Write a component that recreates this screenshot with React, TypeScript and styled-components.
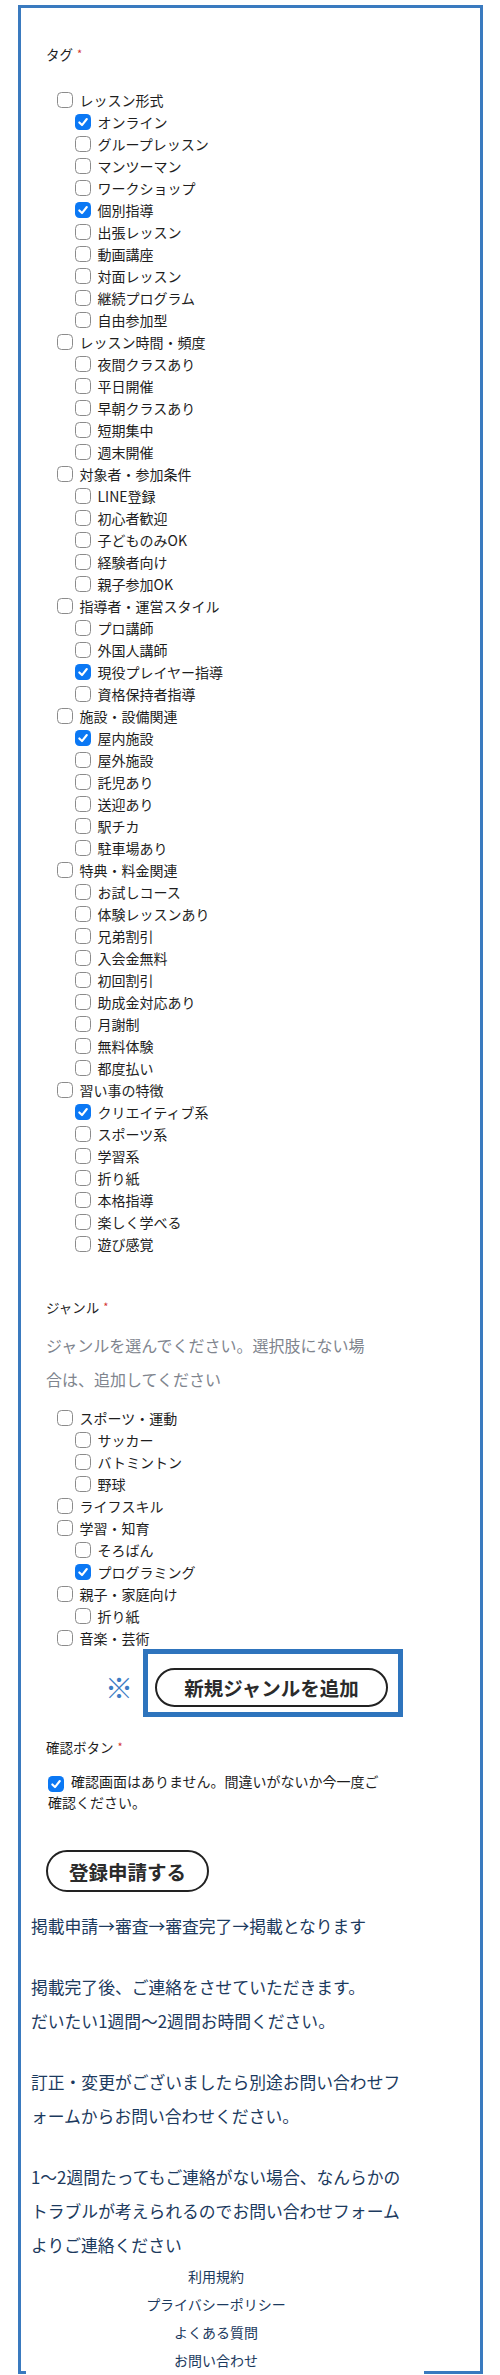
import React from "react";
import styled, { createGlobalStyle } from "styled-components";

const GlobalStyle = createGlobalStyle`
  html, body { margin: 0; padding: 0; background: #fff; }
  body {
    font-family: "Noto Sans CJK JP", "Noto Sans", sans-serif;
    color: #1e1e1e;
  }
  * { box-sizing: border-box; }
`;

type Group = { label: string; checked?: boolean; children: { label: string; checked?: boolean }[] };

const tagGroups: Group[] = [
  {
    label: "レッスン形式",
    children: [
      { label: "オンライン", checked: true },
      { label: "グループレッスン" },
      { label: "マンツーマン" },
      { label: "ワークショップ" },
      { label: "個別指導", checked: true },
      { label: "出張レッスン" },
      { label: "動画講座" },
      { label: "対面レッスン" },
      { label: "継続プログラム" },
      { label: "自由参加型" },
    ],
  },
  {
    label: "レッスン時間・頻度",
    children: [
      { label: "夜間クラスあり" },
      { label: "平日開催" },
      { label: "早朝クラスあり" },
      { label: "短期集中" },
      { label: "週末開催" },
    ],
  },
  {
    label: "対象者・参加条件",
    children: [
      { label: "LINE登録" },
      { label: "初心者歓迎" },
      { label: "子どものみOK" },
      { label: "経験者向け" },
      { label: "親子参加OK" },
    ],
  },
  {
    label: "指導者・運営スタイル",
    children: [
      { label: "プロ講師" },
      { label: "外国人講師" },
      { label: "現役プレイヤー指導", checked: true },
      { label: "資格保持者指導" },
    ],
  },
  {
    label: "施設・設備関連",
    children: [
      { label: "屋内施設", checked: true },
      { label: "屋外施設" },
      { label: "託児あり" },
      { label: "送迎あり" },
      { label: "駅チカ" },
      { label: "駐車場あり" },
    ],
  },
  {
    label: "特典・料金関連",
    children: [
      { label: "お試しコース" },
      { label: "体験レッスンあり" },
      { label: "兄弟割引" },
      { label: "入会金無料" },
      { label: "初回割引" },
      { label: "助成金対応あり" },
      { label: "月謝制" },
      { label: "無料体験" },
      { label: "都度払い" },
    ],
  },
  {
    label: "習い事の特徴",
    children: [
      { label: "クリエイティブ系", checked: true },
      { label: "スポーツ系" },
      { label: "学習系" },
      { label: "折り紙" },
      { label: "本格指導" },
      { label: "楽しく学べる" },
      { label: "遊び感覚" },
    ],
  },
];

const genreGroups: Group[] = [
  {
    label: "スポーツ・運動",
    children: [{ label: "サッカー" }, { label: "バトミントン" }, { label: "野球" }],
  },
  { label: "ライフスキル", children: [] },
  {
    label: "学習・知育",
    children: [{ label: "そろばん" }, { label: "プログラミング", checked: true }],
  },
  { label: "親子・家庭向け", children: [{ label: "折り紙" }] },
  { label: "音楽・芸術", children: [] },
];

const Page = styled.div`
  padding: 5px 0 6px 18px;
`;

const Frame = styled.div`
  width: 465px;
  border: 3px solid #3a7abf;
`;

const FormSection = styled.div`
  width: 369px;
  padding: 35px 0 0 25px;
`;

const Label = styled.div<{ $gap: number }>`
  margin-top: ${(p) => p.$gap}px;
  font-size: 13.5px;
  line-height: 20px;
  color: #1e1e1e;
`;

const Req = styled.span`
  color: #d3342f;
  font-size: 11px;
  margin-left: 4px;
  vertical-align: 2px;
`;

const CheckList = styled.ul<{ $gap: number }>`
  list-style: none;
  margin: ${(p) => p.$gap}px 0 0 11px;
  padding: 0;
`;

const Row = styled.li<{ $child?: boolean }>`
  display: flex;
  align-items: center;
  gap: 6.5px;
  height: 22px;
  padding-left: ${(p) => (p.$child ? 18 : 0)}px;
  font-size: 14px;
  color: #1e1e1e;
  white-space: nowrap;
`;

const Box = styled.span<{ $checked?: boolean }>`
  flex: none;
  display: inline-flex;
  align-items: center;
  justify-content: center;
  width: 16px;
  height: 16px;
  border-radius: 4.5px;
  border: ${(p) => (p.$checked ? "none" : "1.5px solid #8b8b8b")};
  background: ${(p) => (p.$checked ? "#0b78f4" : "#fff")};
`;

const InlineBox = styled(Box)`
  vertical-align: -3px;
  margin-right: 7px;
`;

const Desc = styled.p`
  margin: 11px 0 0;
  font-size: 16px;
  line-height: 34px;
  color: #80858e;
`;

const AddRow = styled.div`
  display: flex;
  align-items: center;
  gap: 10px;
  padding-left: 59px;
`;

const Kome = styled.span`
  font-size: 28px;
  font-weight: 700;
  line-height: 1;
  color: #3d7cc4;
  padding-top: 8px;
`;

const AddFrame = styled.div`
  border: 5px solid #2e74bd;
  padding: 14px 10px 5px 7px;
`;

const Pill = styled.button<{ $w: number; $h: number }>`
  display: flex;
  align-items: center;
  justify-content: center;
  width: ${(p) => p.$w}px;
  height: ${(p) => p.$h}px;
  padding: 0;
  border: 2.5px solid #222;
  border-radius: 999px;
  background: #fff;
  font-family: inherit;
  font-size: 19.5px;
  font-weight: 700;
  color: #2b2b2b;
`;

const SubmitWrap = styled.div`
  margin-top: 37px;
`;

const ConfirmText = styled.div`
  margin-top: 14px;
  padding-left: 2px;
  font-size: 14px;
  line-height: 21px;
  color: #1e1e1e;
`;

const Notes = styled.div`
  margin-top: 17px;
  padding-left: 10px;
`;

const Para = styled.p`
  margin: 0;
  font-size: 16.8px;
  line-height: 34px;
  color: #1c3a5e;
  white-space: nowrap;
  & + & {
    margin-top: 27px;
  }
`;

const Footer = styled.nav`
  width: 398px;
  margin: 0 0 -3px 5px;
  padding-right: 18px;
  background: #fff;
  text-align: center;
`;

const FooterLink = styled.a`
  display: block;
  font-size: 14px;
  line-height: 28px;
  color: #1c3a5e;
  text-decoration: none;
`;

const Check = () => (
  <svg width="12" height="12" viewBox="0 0 12 12">
    <path
      d="M2.3 6.4 L5 9.1 L9.8 3"
      stroke="#fff"
      strokeWidth="2.1"
      fill="none"
      strokeLinecap="round"
      strokeLinejoin="round"
    />
  </svg>
);

const CheckItem = ({ label, checked, child }: { label: string; checked?: boolean; child?: boolean }) => (
  <Row $child={child}>
    <Box $checked={checked}>{checked && <Check />}</Box>
    <span>{label}</span>
  </Row>
);

const GroupList = ({ groups, gap }: { groups: Group[]; gap: number }) => (
  <CheckList $gap={gap}>
    {groups.map((g) => (
      <React.Fragment key={g.label}>
        <CheckItem label={g.label} checked={g.checked} />
        {g.children.map((c) => (
          <CheckItem key={c.label} label={c.label} checked={c.checked} child />
        ))}
      </React.Fragment>
    ))}
  </CheckList>
);

export default function App() {
  return (
    <>
      <GlobalStyle />
      <Page>
        <Frame>
          <FormSection>
            <Label $gap={0}>
              タグ<Req>*</Req>
            </Label>
            <GroupList groups={tagGroups} gap={25} />

            <Label $gap={41}>
              ジャンル<Req>*</Req>
            </Label>
            <Desc>
              ジャンルを選んでください。選択肢にない場
              <br />
              合は、追加してください
            </Desc>
            <GroupList groups={genreGroups} gap={11} />

            <AddRow>
              <Kome>※</Kome>
              <AddFrame>
                <Pill type="button" $w={233} $h={39}>
                  新規ジャンルを追加
                </Pill>
              </AddFrame>
            </AddRow>

            <Label $gap={19}>
              確認ボタン<Req>*</Req>
            </Label>
            <ConfirmText>
              <InlineBox $checked>
                <Check />
              </InlineBox>
              確認画面はありません。間違いがないか今一度ご
              <br />
              確認ください。
            </ConfirmText>

            <SubmitWrap>
              <Pill type="button" $w={163} $h={42}>
                登録申請する
              </Pill>
            </SubmitWrap>
          </FormSection>

          <Notes>
            <Para>掲載申請→審査→審査完了→掲載となります</Para>
            <Para>
              掲載完了後、ご連絡をさせていただきます。
              <br />
              だいたい1週間〜2週間お時間ください。
            </Para>
            <Para>
              訂正・変更がございましたら別途お問い合わせフ
              <br />
              ォームからお問い合わせください。
            </Para>
            <Para>
              1〜2週間たってもご連絡がない場合、なんらかの
              <br />
              トラブルが考えられるのでお問い合わせフォーム
              <br />
              よりご連絡ください
            </Para>
          </Notes>

          <Footer>
            <FooterLink href="#">利用規約</FooterLink>
            <FooterLink href="#">プライバシーポリシー</FooterLink>
            <FooterLink href="#">よくある質問</FooterLink>
            <FooterLink href="#">お問い合わせ</FooterLink>
          </Footer>
        </Frame>
      </Page>
    </>
  );
}
